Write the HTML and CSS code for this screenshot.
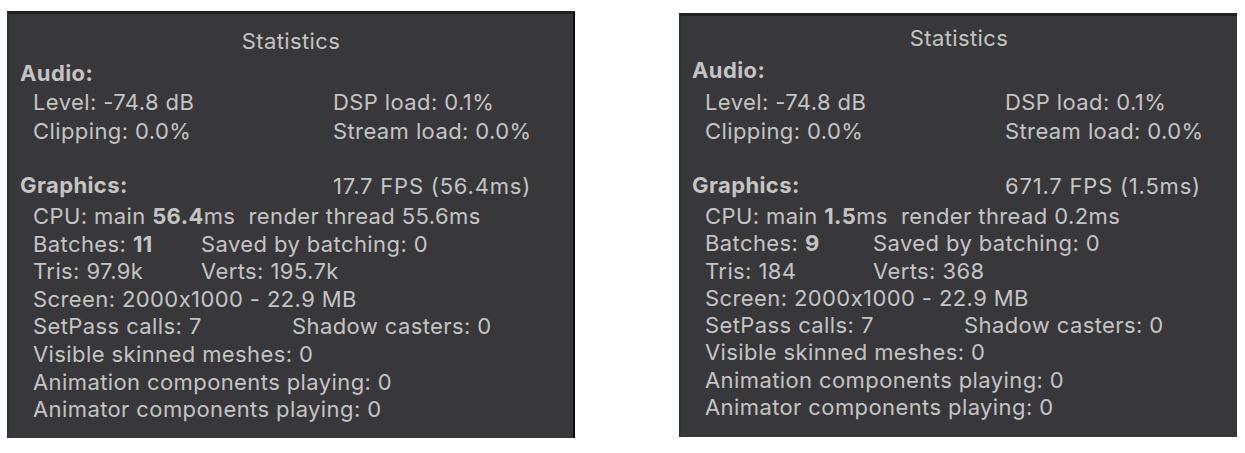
FILE: index.html
```html
<!DOCTYPE html>
<html>
<head>
<meta charset="utf-8">
<link rel="stylesheet" href="styles.css">
</head>
<body>
<div class="page">
  <section class="panel panel-left">
    <div class="title">Statistics</div>
    <div class="head">Audio:</div>
    <div class="audio">
      <div>Level: -74.8 dB</div><div>DSP load: 0.1%</div>
      <div>Clipping: 0.0%</div><div>Stream load: 0.0%</div>
    </div>
    <div class="ghead"><span class="head-in">Graphics:</span><span class="fps">17.7 FPS (56.4ms)</span></div>
    <div class="rows">
      <div class="row">CPU: main <b>56.4</b>ms  render thread 55.6ms</div>
      <div class="row"><span class="c1">Batches: <b>11</b></span>Saved by batching: 0</div>
      <div class="row"><span class="c1">Tris: 97.9k</span>Verts: 195.7k</div>
      <div class="row">Screen: 2000x1000 - 22.9 MB</div>
      <div class="row"><span class="c2">SetPass calls: 7</span>Shadow casters: 0</div>
      <div class="row">Visible skinned meshes: 0</div>
      <div class="row">Animation components playing: 0</div>
      <div class="row">Animator components playing: 0</div>
    </div>
  </section>
  <section class="panel panel-right">
    <div class="title">Statistics</div>
    <div class="head">Audio:</div>
    <div class="audio">
      <div>Level: -74.8 dB</div><div>DSP load: 0.1%</div>
      <div>Clipping: 0.0%</div><div>Stream load: 0.0%</div>
    </div>
    <div class="ghead"><span class="head-in">Graphics:</span><span class="fps">671.7 FPS (1.5ms)</span></div>
    <div class="rows">
      <div class="row">CPU: main <b>1.5</b>ms  render thread 0.2ms</div>
      <div class="row"><span class="c1">Batches: <b>9</b></span>Saved by batching: 0</div>
      <div class="row"><span class="c1">Tris: 184</span>Verts: 368</div>
      <div class="row">Screen: 2000x1000 - 22.9 MB</div>
      <div class="row"><span class="c2">SetPass calls: 7</span>Shadow casters: 0</div>
      <div class="row">Visible skinned meshes: 0</div>
      <div class="row">Animation components playing: 0</div>
      <div class="row">Animator components playing: 0</div>
    </div>
  </section>
</div>
</body>
</html>
```

FILE: styles.css
```css
html, body {
  margin: 0;
  padding: 0;
  background: #ffffff;
}
.page {
  display: flex;
  align-items: flex-start;
  padding-left: 7px;
  font-family: Inter, "Liberation Sans", sans-serif;
  font-size: 22px;
  letter-spacing: 0.4px;
  color: #c4c4c4;
}
.panel {
  box-sizing: border-box;
  background: #38383a;
  border-top: 3px solid #212123;
  border-left: 2px solid #2b313d;
  padding-top: 13px;
}
.panel-left {
  margin-top: 11px;
  width: 568px;
  height: 427px;
  border-right: 2px solid #0c0c0c;
}
.panel-right {
  margin-top: 13px;
  margin-left: 104px;
  width: 558px;
  height: 424px;
  padding-top: 8px;
}
.title {
  text-align: center;
  line-height: 28px;
}
.head {
  font-weight: 700;
  padding-left: 11px;
  margin-top: 4px;
  line-height: 29px;
}
.audio {
  display: grid;
  grid-template-columns: 300px auto;
  padding-left: 24px;
  line-height: 29px;
}
.panel-right .audio {
  margin-top: 3px;
}
.ghead {
  display: grid;
  grid-template-columns: 313px auto;
  padding-left: 11px;
  margin-top: 25px;
  line-height: 28px;
}
.head-in {
  font-weight: 700;
}
.fps {
  position: relative;
  top: 1px;
  letter-spacing: 0.8px;
}
.rows {
  padding-left: 24px;
  margin-top: 4px;
}
.row {
  line-height: 27.6px;
  white-space: pre;
}
.panel-right .row {
  line-height: 27.3px;
}
.c1 {
  display: inline-block;
  width: 168px;
}
.c2 {
  display: inline-block;
  width: 259px;
}
b {
  font-weight: 700;
}
```
